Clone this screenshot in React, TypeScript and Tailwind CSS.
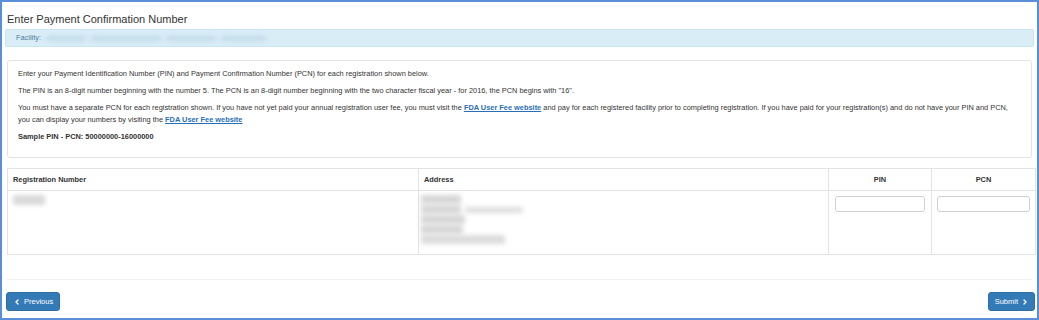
import React from "react";
import { ChevronLeft, ChevronRight } from "lucide-react";

const FeeLink: React.FC = () => (
	<a href="#" className="font-bold text-[#2a6fb5] underline">
		FDA User Fee website
	</a>
);

const Blur: React.FC<{ className: string }> = ({ className }) => (
	<span className={`block rounded-[2px] blur-[2px] ${className}`}></span>
);

const App: React.FC = () => {
	return (
		<div className="h-[320px] w-[1039px] overflow-hidden border-[2px] border-[#5a8fd8] bg-white font-['Liberation_Sans',Arial,sans-serif] text-[#333]">
			<h1 className="px-[5px] pt-[10px] text-[11px] leading-[15px]">
				Enter Payment Confirmation Number
			</h1>

			<div className="mx-[3px] mt-[2px] flex h-[18px] items-center gap-[5px] rounded-[2px] border border-[#c8e5f0] bg-[#d9edf7] pl-[10px] text-[7.4px] text-[#4b7a99]">
				<span>Facility:</span>
				<Blur className="h-[5px] w-[40px] bg-[#c2dbe9]" />
				<Blur className="h-[5px] w-[70px] bg-[#c2dbe9]" />
				<Blur className="h-[5px] w-[50px] bg-[#c2dbe9]" />
				<Blur className="h-[5px] w-[45px] bg-[#c2dbe9]" />
			</div>

			<div className="mx-[5px] mt-[13px] h-[98px] rounded-[3px] border border-[#e3e3e3] px-[10px] pt-[7px] text-[7.4px] leading-[12px]">
				<p>
					Enter your Payment Identification Number (PIN) and Payment Confirmation
					Number (PCN) for each registration shown below.
				</p>
				<p className="mt-[5px]">
					The PIN is an 8-digit number beginning with the number 5. The PCN is an
					8-digit number beginning with the two character fiscal year - for 2016, the
					PCN begins with "16".
				</p>
				<p className="mt-[5px]">
					You must have a separate PCN for each registration shown. If you have not yet
					paid your annual registration user fee, you must visit the <FeeLink /> and
					pay for each registered facility prior to completing registration. If you have
					paid for your registration(s) and do not have your PIN and PCN,
					<br />
					you can display your numbers by visiting the <FeeLink />
				</p>
				<p className="mt-[5px] font-bold">Sample PIN - PCN: 50000000-16000000</p>
			</div>

			<table className="mx-[5px] mt-[10px] w-[1028px] table-fixed border-collapse border border-[#e3e3e3] text-[7.4px]">
				<colgroup>
					<col className="w-[411px]" />
					<col className="w-[410px]" />
					<col className="w-[103px]" />
					<col className="w-[104px]" />
				</colgroup>
				<thead>
					<tr className="h-[22px]">
						<th className="border border-[#e3e3e3] px-[5px] text-left font-bold">
							Registration Number
						</th>
						<th className="border border-[#e3e3e3] px-[5px] text-left font-bold">
							Address
						</th>
						<th className="border border-[#e3e3e3] text-center font-bold">PIN</th>
						<th className="border border-[#e3e3e3] text-center font-bold">PCN</th>
					</tr>
				</thead>
				<tbody>
					<tr className="h-[64px] align-top">
						<td className="border border-[#e3e3e3] px-[5px] pt-[4px]">
							<Blur className="h-[10px] w-[32px] bg-[#dadada]" />
						</td>
						<td className="border border-[#e3e3e3] px-[2px] pt-[4px]">
							<div className="flex w-[108px] flex-col gap-[1px] blur-[1px]">
								<Blur className="h-[9px] w-[40px] bg-[#d6d6d6]" />
								<div className="flex gap-[4px]">
									<Blur className="h-[9px] w-[40px] bg-[#d6d6d6]" />
									<Blur className="mt-[2px] h-[6px] w-[58px] bg-[#dedede]" />
								</div>
								<Blur className="h-[9px] w-[44px] bg-[#d6d6d6]" />
								<Blur className="h-[9px] w-[42px] bg-[#d6d6d6]" />
								<Blur className="h-[9px] w-[84px] bg-[#dbdbdb]" />
							</div>
						</td>
						<td className="border border-[#e3e3e3] px-[6px] pt-[5px]">
							<input
								type="text"
								className="block h-[16px] w-full rounded-[3px] border border-[#cfcfcf] bg-white"
							/>
						</td>
						<td className="border border-[#e3e3e3] px-[5px] pt-[5px]">
							<input
								type="text"
								className="block h-[16px] w-full rounded-[3px] border border-[#cfcfcf] bg-white"
							/>
						</td>
					</tr>
				</tbody>
			</table>

			<div className="mx-[5px] mt-[24px] border-t border-[#efefef]"></div>

			<div className="flex items-center justify-between pl-[4px] pr-[2px] pt-[12px]">
				<button className="flex h-[19px] items-center gap-[3px] rounded-[3px] border border-[#2e6da4] bg-[#337ab7] pl-[6px] pr-[6px] text-[7.5px] text-white">
					<ChevronLeft size={8} strokeWidth={4} />
					Previous
				</button>
				<button className="flex h-[19px] items-center gap-[3px] rounded-[3px] border border-[#2e6da4] bg-[#337ab7] pl-[6px] pr-[5px] text-[7.5px] text-white">
					Submit
					<ChevronRight size={8} strokeWidth={4} />
				</button>
			</div>
		</div>
	);
};

export default App;
